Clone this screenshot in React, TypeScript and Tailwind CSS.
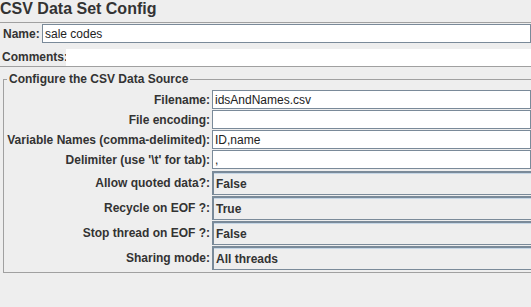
import React from "react";

const font = { fontFamily: '"Liberation Sans", Arial, sans-serif' };

function TextRow({ label, value }: { label: string; value: string }) {
  return (
    <div className="flex h-[20px] items-start">
      <div className="w-[211px] shrink-0 h-[19px] flex items-center justify-end pr-[2px] font-bold text-[12px] text-[#333333] whitespace-nowrap">
        {label}
      </div>
      <div className="flex-1 h-[19px] bg-white border border-[#7a8a99] flex items-center pl-[2px] text-[12px] text-[#222222] whitespace-nowrap overflow-hidden">
        {value}
      </div>
    </div>
  );
}

function ComboRow({ label, value }: { label: string; value: string }) {
  return (
    <div className="flex h-[25px] items-start">
      <div className="w-[211px] shrink-0 h-[24px] flex items-center justify-end pr-[2px] font-bold text-[12px] text-[#333333] whitespace-nowrap">
        {label}
      </div>
      <div className="flex-1 h-[24px] bg-[#eeeeee] border-t-2 border-l-2 border-b border-[#7a8a99] shadow-[inset_0_1px_0_#c5d6e6] flex items-center pl-[2px] font-bold text-[12px] text-[#333333] whitespace-nowrap overflow-hidden">
        {value}
      </div>
    </div>
  );
}

export default function App() {
  return (
    <div className="w-[531px] h-[307px] bg-[#eeeeee] overflow-hidden text-[#333333]" style={font}>
      <div className="h-[22px] flex items-start">
        <span className="text-[16px] font-bold leading-[18px] text-[#333333]">CSV Data Set Config</span>
      </div>
      <div className="border-t border-[#a0a0a0] h-[1px]" />
      <div className="flex h-[21px] items-start pt-[1px]">
        <div className="w-[42px] shrink-0 h-[19px] flex items-center pl-[3px] font-bold text-[12px]">Name:</div>
        <div className="flex-1 h-[19px] bg-white border border-[#7a8a99] flex items-center pl-[2px] text-[12px] text-[#222222]">
          sale codes
        </div>
      </div>
      <div className="flex h-[23px] items-end border-b border-[#a0a0a0]">
        <div className="w-[66px] shrink-0 h-[18px] flex items-center pl-[2px] font-bold text-[12px]">Comments:</div>
        <div className="flex-1 h-[17px] bg-white" />
      </div>
      <div className="ml-[3px] mt-[12px] border-l border-t border-b border-[#a0a0a0] h-[194px] relative">
        <div className="absolute -top-[7px] left-[3px] bg-[#eeeeee] px-[2px] font-bold text-[12px] leading-[13px]">
          Configure the CSV Data Source
        </div>
        <div className="pt-[10px] -ml-[3px]">
          <TextRow label="Filename:" value="idsAndNames.csv" />
          <TextRow label="File encoding:" value="" />
          <TextRow label="Variable Names (comma-delimited):" value="ID,name" />
          <TextRow label="Delimiter (use '\t' for tab):" value="," />
          <div className="h-[1px]" />
          <ComboRow label="Allow quoted data?:" value="False" />
          <ComboRow label="Recycle on EOF ?:" value="True" />
          <ComboRow label="Stop thread on EOF ?:" value="False" />
          <ComboRow label="Sharing mode:" value="All threads" />
        </div>
      </div>
    </div>
  );
}
